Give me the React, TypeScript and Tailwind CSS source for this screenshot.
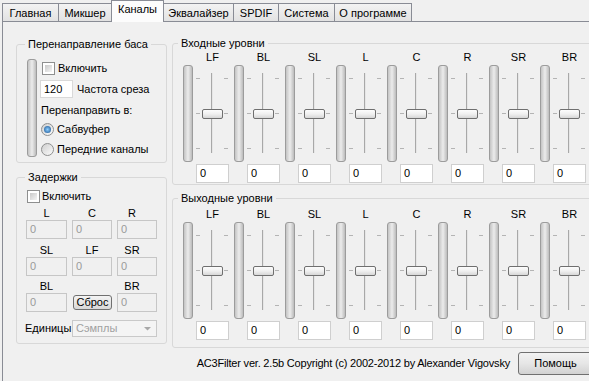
import React from "react";

const Checkbox = () => (
  <div className="w-[13px] h-[13px] border border-[#8e8f8f] bg-white p-[2px] shrink-0">
    <div className="w-full h-full bg-linear-to-br from-[#c9c9c9] to-[#f5f5f5]" />
  </div>
);

const Radio = ({ checked }: { checked?: boolean }) => (
  <div className="w-[13px] h-[13px] rounded-full border border-[#8e8f8f] bg-linear-to-br from-[#cfcfcf] to-[#fbfbfb] flex items-center justify-center shrink-0">
    {checked && <div className="w-[7px] h-[7px] rounded-full bg-radial from-[#8fd0ff] to-[#11508f]" />}
  </div>
);

const Meter = ({ tall }: { tall?: boolean }) => (
  <div
    className={`w-[10px] ${tall ? "h-[98px]" : "h-[97px]"} shrink-0 rounded-[3px] border border-[#9c9c9c] bg-linear-to-r from-[#c4c4c4] via-[#ececec] to-[#bcbcbc]`}
  />
);

const Slider = () => (
  <svg width="41" height="97" viewBox="0 0 41 97" className="shrink-0">
    <defs>
      <linearGradient id="thumbg" x1="0" y1="0" x2="0" y2="1">
        <stop offset="0" stopColor="#fefefe" />
        <stop offset="0.5" stopColor="#f0f0f0" />
        <stop offset="1" stopColor="#d4d4d4" />
      </linearGradient>
    </defs>
    {[13, 48, 83].map((y) => (
      <g key={y}>
        <line x1="3" x2="7" y1={y + 0.5} y2={y + 0.5} stroke="#b4b4b4" />
        <line x1="31" x2="35" y1={y + 0.5} y2={y + 0.5} stroke="#b4b4b4" />
      </g>
    ))}
    <rect x="18" y="8" width="1" height="80" fill="#a8a8a8" />
    <rect x="19" y="8" width="1" height="80" fill="#e6e6e6" />
    <rect x="9.5" y="44.5" width="20" height="9" rx="1.5" fill="url(#thumbg)" stroke="#6f6f6f" />
  </svg>
);

const channels = ["LF", "BL", "SL", "L", "C", "R", "SR", "BR"];

const LevelColumn = ({ label }: { label: string }) => (
  <div className="w-[51px] shrink-0 flex flex-col">
    <div className="ml-[9px] w-[41px] h-[13px] leading-[13px] text-center">{label}</div>
    <div className="mt-[1px] flex">
      <Meter />
      <Slider />
    </div>
    <div className="ml-[13px] mt-[2px] w-[33px] h-[19px] bg-white border border-[#cfcfcf] pl-[3px] leading-[17px]">0</div>
  </div>
);

const tabs = [
  { t: "Главная", w: "w-[57px]" },
  { t: "Микшер", w: "w-[54px]" },
  { t: "Каналы", w: "w-[53px]", sel: true },
  { t: "Эквалайзер", w: "w-[71px]" },
  { t: "SPDIF", w: "w-[46px]" },
  { t: "Система", w: "w-[57px]" },
  { t: "О программе", w: "w-[78px]" },
];

const DisEdit = ({ w }: { w: string }) => (
  <div className={`${w} h-[19px] border border-[#c6c6c6] bg-[#f0f0f0] text-[#9a9a9a] pl-[3px] leading-[17px]`}>0</div>
);

const DelayCell = ({ label, w, lpr }: { label: string; w: string; lpr?: boolean }) => (
  <div className={`${w} flex flex-col`}>
    <div className={`h-[13px] leading-[13px] text-center ${lpr ? "pr-[10px]" : ""}`}>{label}</div>
    <DisEdit w={w} />
  </div>
);

export default function App() {
  return (
    <div className="w-[589px] h-[381px] overflow-hidden bg-[#f0f0f0] text-[11px] text-black font-['Liberation_Sans',Arial,sans-serif]">
      <div className="w-[620px]">
        {/* Tabs */}
        <div className="h-[21px] flex items-end pl-[2px]">
          {tabs.map((tab, i) =>
            tab.sel ? (
              <div
                key={tab.t}
                className={`${tab.w} ${i > 0 ? "-ml-px" : ""} h-[22px] -mb-px relative z-10 border border-b-0 border-[#898c95] bg-[#fcfcfc] flex justify-center pt-[2px] leading-[13px]`}
              >
                {tab.t}
              </div>
            ) : (
              <div
                key={tab.t}
                className={`${tab.w} ${i > 0 ? "-ml-px" : ""} h-[18px] border border-b-0 border-[#898c95] bg-linear-to-b from-[#f3f3f3] to-[#e2e2e2] flex justify-center pt-[3px] leading-[13px]`}
              >
                {tab.t}
              </div>
            )
          )}
        </div>

        {/* Panel */}
        <div className="ml-[2px] border-l border-t border-[#898c95] h-[360px] flex pl-[13px] pt-[15px]">
          {/* Left column */}
          <div className="w-[151px] mt-[1px] flex flex-col">
            <fieldset className="h-[125px] border border-[#d8d8d8] rounded-[3px]">
              <legend className="ml-[8px] px-[3px] leading-[13px]">Перенаправление баса</legend>
              <div className="flex pl-[10px] pt-[8px]">
                <Meter tall />
                <div className="ml-[5px] pt-[2px] flex flex-col">
                  <div className="h-[14px] flex items-center">
                    <Checkbox />
                    <span className="ml-[3px]">Включить</span>
                  </div>
                  <div className="mt-[5px] h-[18px] flex items-center -ml-[2px]">
                    <div className="w-[33px] h-[18px] bg-white border border-[#d9d9d9] pl-[3px] leading-[16px]">120</div>
                    <span className="ml-[4px]">Частота среза</span>
                  </div>
                  <div className="mt-[5px] h-[14px] leading-[14px] -ml-[1px]">Перенаправить в:</div>
                  <div className="mt-[5px] h-[14px] flex items-center -ml-[1px]">
                    <Radio checked />
                    <span className="ml-[3px]">Сабвуфер</span>
                  </div>
                  <div className="mt-[6px] h-[14px] flex items-center -ml-[1px]">
                    <Radio />
                    <span className="ml-[3px]">Передние каналы</span>
                  </div>
                </div>
              </div>
            </fieldset>

            <fieldset className="mt-[8px] h-[173px] border border-[#d8d8d8] rounded-[3px]">
              <legend className="ml-[8px] px-[3px] leading-[13px]">Задержки</legend>
              <div className="pl-[9px] flex flex-col">
                <div className="mt-[5px] h-[14px] flex items-center ml-[1px]">
                  <Checkbox />
                  <span className="ml-[2px]">Включить</span>
                </div>
                <div className="mt-[4px] flex gap-[5px]">
                  <DelayCell label="L" w="w-[41px]" />
                  <DelayCell label="C" w="w-[40px]" />
                  <DelayCell label="R" w="w-[40px]" lpr />
                </div>
                <div className="mt-[5px] flex gap-[5px]">
                  <DelayCell label="SL" w="w-[41px]" />
                  <DelayCell label="LF" w="w-[40px]" />
                  <DelayCell label="SR" w="w-[40px]" lpr />
                </div>
                <div className="mt-[4px] flex gap-[5px]">
                  <DelayCell label="BL" w="w-[41px]" />
                  <div className="w-[40px] flex flex-col">
                    <div className="h-[13px]" />
                    <div className="h-[19px] flex items-center">
                      <div className="ml-[1px] w-[39px] h-[15px] rounded-[3px] border border-[#707070] bg-linear-to-b from-[#f4f4f4] to-[#d8d8d8] flex items-center justify-center leading-[13px]">
                        Сброс
                      </div>
                    </div>
                  </div>
                  <DelayCell label="BR" w="w-[40px]" lpr />
                </div>
                <div className="mt-[8px] flex items-center -ml-[1px]">
                  <div className="w-[47px]">Единицы</div>
                  <div className="w-[85px] h-[17px] border border-[#c9c9c9] bg-[#f4f4f4] flex items-center pl-[3px] text-[#a0a0a0]">
                    <span className="flex-1">Сэмплы</span>
                    <svg width="17" height="15" viewBox="0 0 17 15">
                      <path d="M5 6 L12 6 L8.5 9.5 Z" fill="#a8a8a8" />
                    </svg>
                  </div>
                </div>
              </div>
            </fieldset>
          </div>

          {/* Right column */}
          <div className="ml-[5px] w-[428px] flex flex-col">
            <fieldset className="h-[148px] border border-[#d8d8d8] rounded-[3px]">
              <legend className="ml-[5px] px-[3px] leading-[13px]">Входные уровни</legend>
              <div className="flex pl-[10px] pt-[1px]">
                {channels.map((c) => (
                  <LevelColumn key={c} label={c} />
                ))}
              </div>
            </fieldset>
            <fieldset className="mt-[7px] h-[156px] border border-[#d8d8d8] rounded-[3px]">
              <legend className="ml-[5px] px-[3px] leading-[13px]">Выходные уровни</legend>
              <div className="flex pl-[10px] pt-[3px]">
                {channels.map((c) => (
                  <LevelColumn key={c} label={c} />
                ))}
              </div>
            </fieldset>
            <div className="mt-[4px] h-[23px] flex items-center justify-end pr-[7px]">
              <span className="tracking-[-0.2px]">AC3Filter ver. 2.5b Copyright (c) 2002-2012 by Alexander Vigovsky</span>
              <div className="ml-[8px] w-[75px] h-[23px] rounded-[3px] border border-[#707070] bg-linear-to-b from-[#f2f2f2] via-[#e6e6e6] to-[#d2d2d2] flex items-center justify-center">
                Помощь
              </div>
            </div>
          </div>
        </div>
      </div>
    </div>
  );
}
